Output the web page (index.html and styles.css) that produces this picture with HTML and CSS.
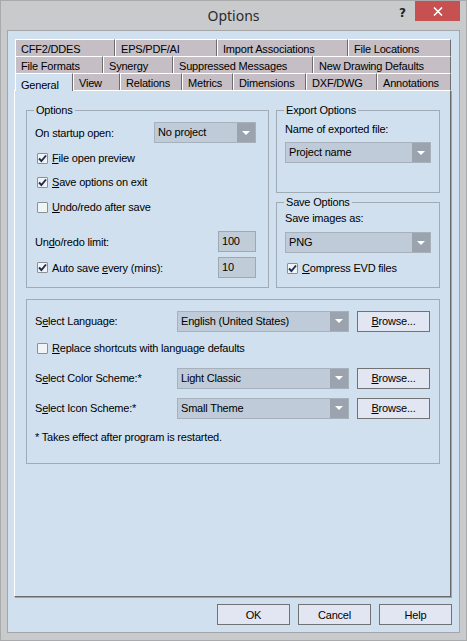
FILE: index.html
```html
<!DOCTYPE html>
<html>
<head>
<meta charset="utf-8">
<title>Options</title>
<link rel="stylesheet" href="styles.css">
</head>
<body>
<div class="window">
  <div class="titlebar">
    <div></div>
    <div class="title">Options</div>
    <div class="controls">
      <span class="help">?</span>
      <span class="close"><svg width="10" height="9" viewBox="0 0 10 9"><path d="M1 0.5L9 8.5M9 0.5L1 8.5" stroke="#fff" stroke-width="1.6"/></svg></span>
    </div>
  </div>
  <div class="client">
    <div class="tabs">
      <div class="tabrow">
        <div class="tab w100">CFF2/DDES</div>
        <div class="tab w102">EPS/PDF/AI</div>
        <div class="tab w131">Import Associations</div>
        <div class="tab w103">File Locations</div>
      </div>
      <div class="tabrow">
        <div class="tab w88">File Formats</div>
        <div class="tab w70">Synergy</div>
        <div class="tab w140">Suppressed Messages</div>
        <div class="tab w138">New Drawing Defaults</div>
      </div>
      <div class="tabrow">
        <div class="tab sel w58">General</div>
        <div class="tab w47">View</div>
        <div class="tab w62">Relations</div>
        <div class="tab w51">Metrics</div>
        <div class="tab w73">Dimensions</div>
        <div class="tab w71">DXF/DWG</div>
        <div class="tab w74">Annotations</div>
      </div>
    </div>
    <div class="page">
      <div class="toprow">
        <fieldset class="grp options">
          <legend>Options</legend>
          <div class="row r1">
            <span class="lbl">On startup open:</span>
            <div class="combo w102c"><span class="val">No project</span><span class="arrow"></span></div>
          </div>
          <div class="crow m7">
            <span class="cb"><svg width="9" height="9" viewBox="0 0 9 9"><path d="M1 4.5L3.4 7L8 1.5" fill="none" stroke="#1c2d4f" stroke-width="1.9"/></svg></span>
            <span><u>F</u>ile open preview</span>
          </div>
          <div class="crow m8">
            <span class="cb"><svg width="9" height="9" viewBox="0 0 9 9"><path d="M1 4.5L3.4 7L8 1.5" fill="none" stroke="#1c2d4f" stroke-width="1.9"/></svg></span>
            <span><u>S</u>ave options on exit</span>
          </div>
          <div class="crow m9">
            <span class="cb"></span>
            <span><u>U</u>ndo/redo after save</span>
          </div>
          <div class="row m16">
            <span class="lbl">Un<u>d</u>o/redo limit:</span>
            <div class="tbox">100</div>
          </div>
          <div class="row m5">
            <span class="cb"><svg width="9" height="9" viewBox="0 0 9 9"><path d="M1 4.5L3.4 7L8 1.5" fill="none" stroke="#1c2d4f" stroke-width="1.9"/></svg></span>
            <span class="lbl">Auto save <u>e</u>very (mins):</span>
            <div class="tbox">10</div>
          </div>
        </fieldset>
        <div class="rightcol">
          <fieldset class="grp export">
            <legend>Export Options</legend>
            <div class="text m6">Name of exported file:</div>
            <div class="combo full m6"><span class="val">Project name</span><span class="arrow"></span></div>
          </fieldset>
          <fieldset class="grp save">
            <legend>Save Options</legend>
            <div class="text m3">Save images as:</div>
            <div class="combo full m7"><span class="val">PNG</span><span class="arrow"></span></div>
            <div class="crow m7">
              <span class="cb"><svg width="9" height="9" viewBox="0 0 9 9"><path d="M1 4.5L3.4 7L8 1.5" fill="none" stroke="#1c2d4f" stroke-width="1.9"/></svg></span>
              <span><u>C</u>ompress EVD files</span>
            </div>
          </fieldset>
        </div>
      </div>
      <div class="grp lower">
        <div class="lrow m10">
          <span class="llbl">S<u>e</u>lect Language:</span>
          <div class="combo wide"><span class="val">English (United States)</span><span class="arrow"></span></div>
          <div class="btn browse"><span><u>B</u>rowse...</span></div>
        </div>
        <div class="crow m8">
          <span class="cb"></span>
          <span><u>R</u>eplace shortcuts with language defaults</span>
        </div>
        <div class="lrow m11">
          <span class="llbl">S<u>e</u>lect Color Scheme:*</span>
          <div class="combo wide"><span class="val">Light Classic</span><span class="arrow"></span></div>
          <div class="btn browse"><span><u>B</u>rowse...</span></div>
        </div>
        <div class="lrow m8">
          <span class="llbl">S<u>e</u>lect Icon Scheme:*</span>
          <div class="combo wide"><span class="val">Small Theme</span><span class="arrow"></span></div>
          <div class="btn browse"><span><u>B</u>rowse...</span></div>
        </div>
        <div class="text m12">* Takes effect after program is restarted.</div>
      </div>
    </div>
    <div class="buttons">
      <div class="btn">OK</div>
      <div class="btn">Cancel</div>
      <div class="btn">Help</div>
    </div>
  </div>
</div>
</body>
</html>
```

FILE: styles.css
```css
html, body {
  margin: 0;
  padding: 0;
}
body {
  background: #c9cacc;
  font-family: "Liberation Sans", Arial, sans-serif;
  font-size: 11px;
  letter-spacing: -0.2px;
  color: #000;
}
.window {
  width: 467px;
  height: 641px;
  box-sizing: border-box;
  border: 1px solid #a9aaac;
  background: #c9cacc;
}
.titlebar {
  height: 29px;
  display: grid;
  grid-template-columns: 1fr auto 1fr;
}
.title {
  font-family: "Noto Sans", "Open Sans", sans-serif;
  font-size: 14px;
  letter-spacing: 0;
  color: #2b2b2b;
  line-height: 30px;
}
.controls {
  justify-self: end;
  display: flex;
  align-items: flex-start;
  margin-right: 6px;
}
.help {
  font-family: "DejaVu Sans", sans-serif;
  font-weight: bold;
  font-size: 12px;
  letter-spacing: 0;
  color: #222;
  margin-top: 5px;
  margin-right: 9px;
}
.close {
  width: 45px;
  height: 20px;
  background: #c75050;
  display: flex;
  align-items: center;
  justify-content: center;
}
.client {
  margin-left: 6px;
  width: 453px;
  height: 603px;
  box-sizing: border-box;
  border: 1px solid #a3a5a8;
  background: #d0e0ef;
  padding: 8px 8px 0 6px;
}
.tabs {
  margin-left: 1px;
  width: 436px;
  position: relative;
  z-index: 1;
}
.tabrow {
  display: flex;
  height: 17px;
  align-items: flex-start;
}
.tab {
  box-sizing: border-box;
  height: 17px;
  border-top: 1px solid #fff;
  border-left: 1px solid #fff;
  border-right: 1px solid #6c6c6c;
  background: #c5bec5;
  padding: 3px 0 0 5px;
  line-height: 13px;
  white-space: nowrap;
  overflow: hidden;
}
.tab.sel {
  background: #d0e0ef;
  height: 18px;
  padding-top: 5px;
}
.w100 { width: 100px; }
.w102 { width: 102px; }
.w131 { width: 131px; }
.w103 { width: 103px; }
.w88 { width: 88px; }
.w70 { width: 70px; }
.w140 { width: 140px; }
.w138 { width: 138px; }
.w58 { width: 58px; }
.w47 { width: 47px; }
.w62 { width: 62px; }
.w51 { width: 51px; }
.w73 { width: 73px; }
.w71 { width: 71px; }
.w74 { width: 74px; }

.page {
  box-sizing: border-box;
  width: 437px;
  height: 507px;
  border: 1px solid;
  border-color: #fff #6a6a6a #6a6a6a #fff;
  box-shadow: 1px 1px 0 #a2a2a2;
  padding: 13px 10px 0 11px;
}
.toprow {
  display: flex;
  gap: 7px;
}
.grp {
  margin: 0;
  box-sizing: border-box;
  border: 1px solid #a1abb6;
  min-width: 0;
}
fieldset.grp {
  padding: 0 12px 0 8px;
}
legend {
  padding: 0 2px;
  margin-left: -1px;
  line-height: 13px;
}
.options {
  width: 243px;
  height: 184px;
}
.rightcol {
  width: 164px;
  display: flex;
  flex-direction: column;
  gap: 3px;
}
.export {
  height: 89px;
}
.save {
  height: 92px;
}
.export, .save {
  padding-right: 8px !important;
}
.row {
  display: flex;
  align-items: center;
  height: 21px;
}
.r1 { margin-top: 5px; }
.lbl {
  flex: 1;
}
.crow {
  display: flex;
  align-items: center;
  height: 16px;
}
.cb {
  box-sizing: border-box;
  width: 11px;
  height: 11px;
  border: 1px solid #8b9096;
  border-radius: 1px;
  background: #f1f4f7;
  margin-left: 2px;
  margin-right: 4px;
  display: flex;
  align-items: center;
  justify-content: center;
  flex: none;
}
.text {
  line-height: 13px;
}
.m3 { margin-top: 3px; }
.m5 { margin-top: 5px; }
.m6 { margin-top: 6px; }
.m7 { margin-top: 7px; }
.m8 { margin-top: 8px; }
.m9 { margin-top: 9px; }
.m10 { margin-top: 10px; }
.m11 { margin-top: 11px; }
.m12 { margin-top: 12px; }
.m16 { margin-top: 16px; }

.combo {
  display: flex;
  height: 21px;
  box-sizing: border-box;
  border: 1px solid #a7b1bc;
  background: #bfcbd8;
}
.combo .val {
  flex: 1;
  padding-left: 3px;
  line-height: 19px;
  white-space: nowrap;
  overflow: hidden;
}
.combo .arrow {
  width: 18px;
  background: #9ba4ae;
  display: flex;
  align-items: center;
  justify-content: center;
}
.combo .arrow::after {
  content: "";
  border-left: 4px solid transparent;
  border-right: 4px solid transparent;
  border-top: 4px solid #fff;
}
.w102c { width: 102px; }
.full { width: 100%; }
.wide { width: 172px; }
.tbox {
  box-sizing: border-box;
  width: 38px;
  height: 21px;
  border: 1px solid #9ea8b3;
  background: #c0ccd8;
  padding-left: 3px;
  line-height: 19px;
}
.lower {
  margin-top: 11px;
  height: 165px;
  padding: 0 9px 0 8px;
}
.lrow {
  display: flex;
  align-items: center;
  height: 22px;
}
.llbl {
  width: 142px;
}
.btn {
  box-sizing: border-box;
  width: 73px;
  height: 21px;
  border: 1px solid #727272;
  background: #e2e6f3;
  display: flex;
  align-items: center;
  justify-content: center;
}
.browse {
  margin-left: 8px;
}
.buttons {
  display: flex;
  justify-content: flex-end;
  gap: 8px;
  margin-top: 7px;
  margin-right: -1px;
}
```
